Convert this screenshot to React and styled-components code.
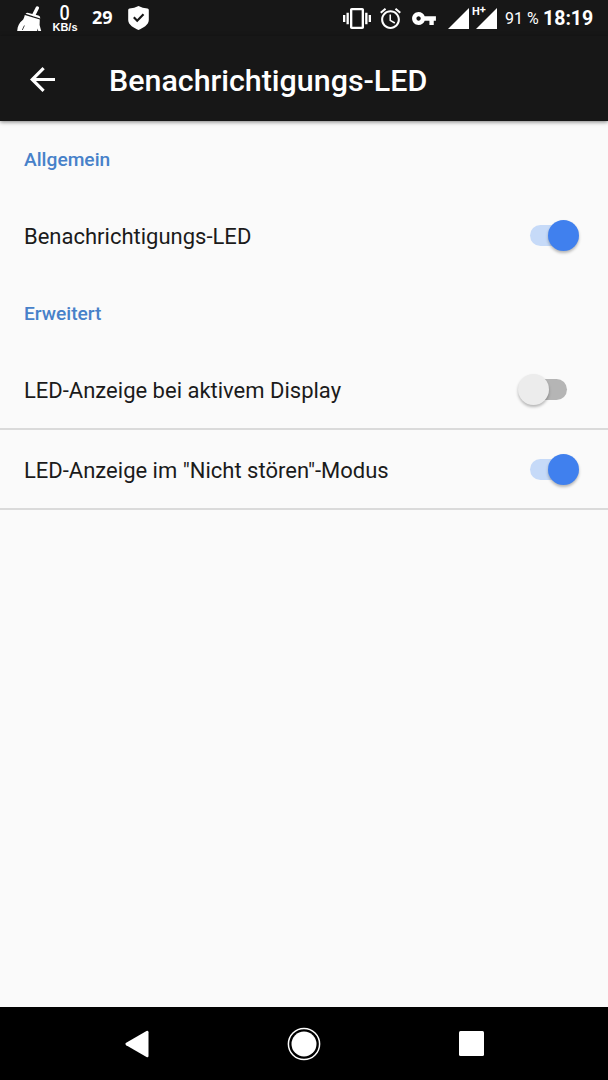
import React, { useState } from "react";
import styled, { createGlobalStyle } from "styled-components";

function App() {
  const [settings, setSettings] = useState({
    led: true,
    screenOn: false,
    dnd: true,
  });

  const toggle = (key) =>
    setSettings((prev) => ({ ...prev, [key]: !prev[key] }));

  return (
    <>
      <GlobalStyle />
      <Screen>
        <StatusBar />
        <AppBar>
          <BackButton aria-label="Zurück">
            <Icon width={25} height={25} viewBox="4 4 16 16">
              <path d="M20 11H7.83l5.59-5.59L12 4l-8 8 8 8 1.41-1.41L7.83 13H20v-2z" />
            </Icon>
          </BackButton>
          <Title>Benachrichtigungs-LED</Title>
        </AppBar>
        <Content>
          <Category>Allgemein</Category>
          <Setting
            label="Benachrichtigungs-LED"
            on={settings.led}
            onToggle={() => toggle("led")}
          />
          <Category>Erweitert</Category>
          <Setting
            label="LED-Anzeige bei aktivem Display"
            on={settings.screenOn}
            onToggle={() => toggle("screenOn")}
            divider
          />
          <Setting
            label={'LED-Anzeige im "Nicht stören"-Modus'}
            on={settings.dnd}
            onToggle={() => toggle("dnd")}
            divider
          />
        </Content>
        <NavBar>
          <Icon width={24} height={28} viewBox="0 0 24 28">
            <path d="M21.500 1q2-.9 2 1.300v23.400q0 2.200-2 1.300L1.200 15.200q-1.600-1.200 0-2.400z" />
          </Icon>
          <Icon width={34} height={34} viewBox="0 0 34 34">
            <circle cx="17" cy="17" r="15.600" fill="none" stroke="#fff" strokeWidth="1.500" />
            <circle cx="17" cy="17" r="12.500" />
          </Icon>
          <Icon width={25} height={25} viewBox="0 0 25 25">
            <rect width="25" height="25" rx="1.500" />
          </Icon>
        </NavBar>
      </Screen>
    </>
  );
}

function StatusBar() {
  return (
    <StatusStyled>
      <StatusGroup>
        <Icon width={25} height={25} viewBox="0 0 25 25">
          <path d="M20.300 2L17 8.500" stroke="#fff" strokeWidth="3.400" strokeLinecap="round" />
          <path d="M8.600 7.800q1-1.300 2.800-.9l10 2.600q2 .7 1.900 3.100z" />
          <path d="M7.800 9l15 4.400-.2 5.600 1.600 6h-2.900l-.8-2.400-.3 2.400H.2c.3-5 2.200-8.200 5-10.400C6.800 13.200 7.300 11 7.800 9z" />
          <path d="M7.400 19.500L5.300 24" stroke="#171717" strokeWidth=".8" />
        </Icon>
        <Speed>
          <span>0</span>
          <small>KB/s</small>
        </Speed>
        <Count>29</Count>
        <Icon width={21} height={24} viewBox="0 0 21 24">
          <path d="M1.500 2.500Q6.500 2 10.500 0q4 2 9 2.500 1.300.2 1.300 1.500v10c0 5-6 8-10.300 10C6.200 22 .2 19 .2 14V4q0-1.300 1.300-1.500z" />
          <path d="M5.800 11.300l3.400 3.400 6.300-6.400" fill="none" stroke="#171717" strokeWidth="2.200" />
        </Icon>
      </StatusGroup>
      <StatusGroup>
        <Icon width={28} height={21} viewBox="0 3 24 18">
          <path d="M0 15h2V9H0v6zm3 2h2V7H3v10zm19-8v6h2V9h-2zm-3 8h2V7h-2v10zM16.500 3h-9C6.670 3 6 3.670 6 4.500v15c0 .83.670 1.500 1.500 1.500h9c.83 0 1.500-.67 1.500-1.500v-15c0-.83-.67-1.500-1.500-1.500zM16 19H8V5h8v14z" />
        </Icon>
        <Icon $left={9} width={21} height={21} viewBox="2 1.860 20 20.140">
          <path d="M22 5.720l-4.600-3.860-1.290 1.530 4.600 3.860L22 5.720zM7.880 3.390L6.600 1.860 2 5.710l1.290 1.530 4.590-3.850zM12.500 8H11v6l4.750 2.850.75-1.230-4-2.370V8zM12 4c-4.970 0-9 4.030-9 9s4.020 9 9 9c4.970 0 9-4.030 9-9s-4.030-9-9-9zm0 16c-3.870 0-7-3.130-7-7s3.130-7 7-7 7 3.130 7 7-3.130 7-7 7z" />
        </Icon>
        <Icon $left={11} width={24} height={13} viewBox="1 6 22 12">
          <path d="M12.650 10C11.830 7.670 9.610 6 7 6c-3.310 0-6 2.690-6 6s2.690 6 6 6c2.610 0 4.830-1.670 5.650-4H17v4h4v-4h2v-4H12.650zM7 14c-1.100 0-2-.9-2-2s.9-2 2-2 2 .9 2 2-.9 2-2 2z" />
        </Icon>
        <Icon $left={12} width={21} height={21} viewBox="0 0 21 21">
          <path d="M0 21L21 0v21z" />
        </Icon>
        <Signal>
          <NetworkType>
            H<sup>+</sup>
          </NetworkType>
          <Icon width={21} height={21} viewBox="0 0 21 21">
            <path d="M0 21L21 0v21z" />
          </Icon>
        </Signal>
        <Battery>91 %</Battery>
        <Clock>18:19</Clock>
      </StatusGroup>
    </StatusStyled>
  );
}

function Setting({ label, on, onToggle, divider }) {
  return (
    <Row $divider={divider}>
      <Label>{label}</Label>
      <Switch role="switch" aria-checked={on} onClick={onToggle} $on={on}>
        <Track $on={on} />
        <Thumb $on={on} />
      </Switch>
    </Row>
  );
}

const GlobalStyle = createGlobalStyle`
  * {
    box-sizing: border-box;
  }
  body {
    margin: 0;
    background: #fafafa;
    font-family: Roboto, sans-serif;
  }
  button {
    border: 0;
    padding: 0;
    background: none;
    cursor: pointer;
  }
`;

const Screen = styled.div`
  display: flex;
  flex-direction: column;
  width: 608px;
  height: 1080px;
  background: #fafafa;
`;

const Icon = styled.svg`
  display: block;
  flex-shrink: 0;
  margin-left: ${({ $left }) => $left || 0}px;
  fill: #fff;
`;

const StatusStyled = styled.div`
  display: flex;
  justify-content: space-between;
  height: 36px;
  padding: 0 15px 0 17px;
  background: #171717;
  color: #fff;
`;

const StatusGroup = styled.div`
  display: flex;
  align-items: center;
`;

const Speed = styled.div`
  display: flex;
  flex-direction: column;
  align-items: center;
  width: 26px;
  margin-left: 10px;
  padding-top: 1px;
  span {
    font-size: 20px;
    font-weight: 500;
    line-height: 16px;
    transform: scaleX(0.9);
  }
  small {
    font-family: "Liberation Sans", sans-serif;
    font-size: 11px;
    font-weight: 700;
    line-height: 12px;
  }
`;

const Count = styled.span`
  width: 22px;
  margin: 0 14px 2px 14px;
  font-family: "Open Sans", sans-serif;
  font-size: 18px;
  font-weight: 700;
  line-height: 20px;
`;

const Signal = styled.div`
  position: relative;
  margin-left: 7px;
`;

const NetworkType = styled.span`
  position: absolute;
  top: -2px;
  left: -4px;
  display: flex;
  font-size: 11px;
  font-weight: 700;
  line-height: 12px;
  sup {
    font-size: 11px;
    line-height: 7px;
  }
`;

const Battery = styled.span`
  width: 35px;
  margin-left: 8px;
  font-size: 16px;
  white-space: nowrap;
`;

const Clock = styled.span`
  width: 50px;
  margin-left: 3px;
  font-size: 19.500px;
  font-weight: 700;
`;

const AppBar = styled.header`
  display: flex;
  align-items: center;
  height: 85px;
  padding: 1px 0 0 30px;
  background: #171717;
  color: #fff;
  box-shadow: 0 1px 4px rgba(0, 0, 0, 0.5);
`;

const BackButton = styled.button`
  width: 25px;
  margin-right: 54px;
`;

const Title = styled.h1`
  margin: 0;
  padding-top: 3px;
  font-size: 30.400px;
  font-weight: 500;
  line-height: 40px;
`;

const Content = styled.main`
  flex: 1;
  padding-top: 1px;
`;

const Category = styled.h2`
  height: 74px;
  margin: 0;
  padding: 26px 24px 0;
  color: #4781c9;
  font-size: 19.200px;
  font-weight: 500;
  line-height: 24px;
`;

const Row = styled.div`
  display: flex;
  align-items: center;
  justify-content: space-between;
  height: 80px;
  padding: 0 29px 0 24px;
  border-bottom: 2px solid
    ${({ $divider }) => ($divider ? "#dadada" : "transparent")};
`;

const Label = styled.span`
  padding-top: 4px;
  color: #1b1b1b;
  font-size: 22px;
  line-height: 28px;
`;

const Switch = styled.button`
  display: flex;
  flex-direction: ${({ $on }) => ($on ? "row" : "row-reverse")};
  align-items: center;
  margin-right: ${({ $on }) => ($on ? 0 : 12)}px;
`;

const Track = styled.span`
  width: 37px;
  height: 21px;
  border-radius: 11px;
  background: ${({ $on }) => ($on ? "#c6daf8" : "#b5b5b5")};
  margin: ${({ $on }) => ($on ? "0 -19px 0 0" : "0 0 0 -19px")};
`;

const Thumb = styled.span`
  z-index: 1;
  width: 31px;
  height: 31px;
  border-radius: 50%;
  background: ${({ $on }) => ($on ? "#4080ee" : "#ececec")};
  box-shadow: 0 2px 3px rgba(0, 0, 0, 0.28);
`;

const NavBar = styled.nav`
  display: flex;
  align-items: center;
  justify-content: space-between;
  height: 73px;
  padding: 0 124px 0 125px;
  background: #000;
`;

export default App;
